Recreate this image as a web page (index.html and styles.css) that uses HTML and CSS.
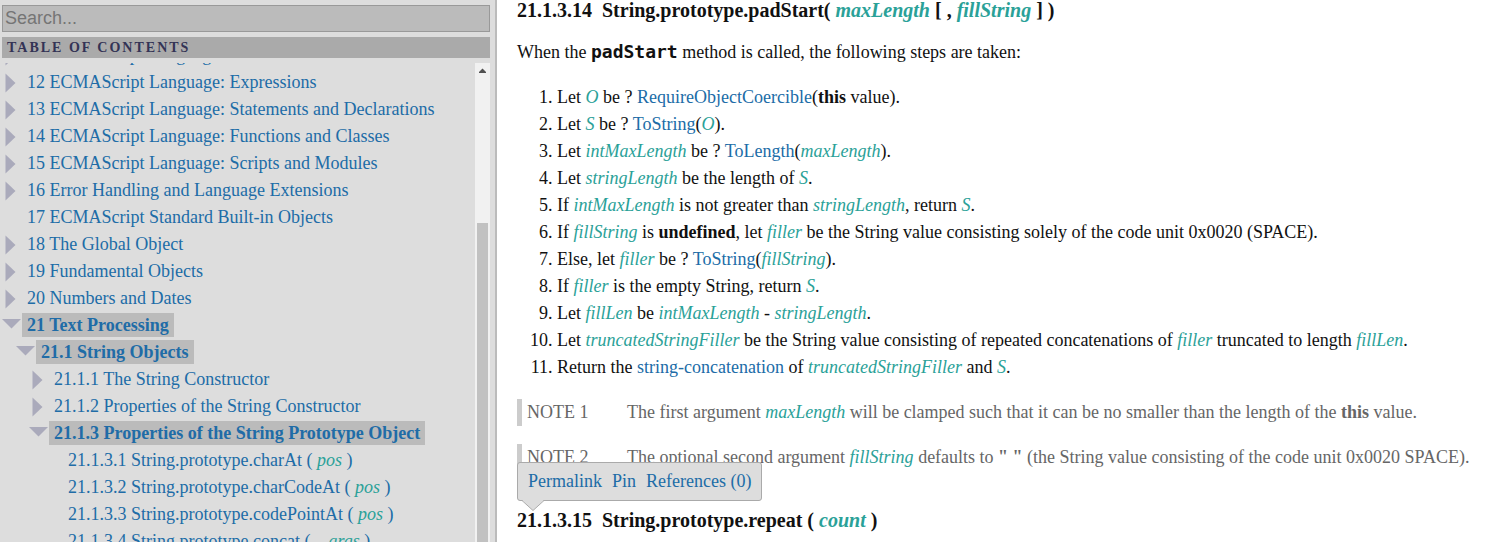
FILE: index.html
```
<!DOCTYPE html>
<html lang="en">
<head>
<meta charset="utf-8">
<title>ECMAScript Language Specification</title>
<link rel="stylesheet" href="styles.css">
</head>
<body>
<svg class="sprite" aria-hidden="true">
  <symbol id="closed" viewBox="0 0 20 27"><path d="M3.5 4.500v19l10-9.500z"/></symbol>
  <symbol id="open" viewBox="0 0 20 27"><path d="M0 7h19l-9.500 9.500z"/></symbol>
</svg>
<aside class="menu">
  <input class="search" type="text" placeholder="Search..." aria-label="Search">
  <div class="menu-header">Table of Contents</div>
  <div class="toc-pane">
    <nav class="toc">
      <ul class="toc-list">
        <li><div class="row"><button class="toggle" aria-label="Expand"><svg><use href="#closed"/></svg></button><a href="#s11">11 ECMAScript Language: Lexical Grammar</a></div></li>
        <li><div class="row"><button class="toggle" aria-label="Expand"><svg><use href="#closed"/></svg></button><a href="#s12">12 ECMAScript Language: Expressions</a></div></li>
        <li><div class="row"><button class="toggle" aria-label="Expand"><svg><use href="#closed"/></svg></button><a href="#s13">13 ECMAScript Language: Statements and Declarations</a></div></li>
        <li><div class="row"><button class="toggle" aria-label="Expand"><svg><use href="#closed"/></svg></button><a href="#s14">14 ECMAScript Language: Functions and Classes</a></div></li>
        <li><div class="row"><button class="toggle" aria-label="Expand"><svg><use href="#closed"/></svg></button><a href="#s15">15 ECMAScript Language: Scripts and Modules</a></div></li>
        <li><div class="row"><button class="toggle" aria-label="Expand"><svg><use href="#closed"/></svg></button><a href="#s16">16 Error Handling and Language Extensions</a></div></li>
        <li><div class="row"><span class="toggle"></span><a href="#s17">17 ECMAScript Standard Built-in Objects</a></div></li>
        <li><div class="row"><button class="toggle" aria-label="Expand"><svg><use href="#closed"/></svg></button><a href="#s18">18 The Global Object</a></div></li>
        <li><div class="row"><button class="toggle" aria-label="Expand"><svg><use href="#closed"/></svg></button><a href="#s19">19 Fundamental Objects</a></div></li>
        <li><div class="row"><button class="toggle" aria-label="Expand"><svg><use href="#closed"/></svg></button><a href="#s20">20 Numbers and Dates</a></div></li>
        <li><div class="row revealed"><button class="toggle" aria-label="Collapse"><svg><use href="#open"/></svg></button><a href="#s21">21 Text Processing</a></div>
          <ul class="level-2">
            <li><div class="row revealed"><button class="toggle" aria-label="Collapse"><svg><use href="#open"/></svg></button><a href="#s21-1">21.1 String Objects</a></div>
              <ul class="level-3">
                <li><div class="row"><button class="toggle" aria-label="Expand"><svg><use href="#closed"/></svg></button><a href="#s21-1-1">21.1.1 The String Constructor</a></div></li>
                <li><div class="row"><button class="toggle" aria-label="Expand"><svg><use href="#closed"/></svg></button><a href="#s21-1-2">21.1.2 Properties of the String Constructor</a></div></li>
                <li><div class="row revealed"><button class="toggle" aria-label="Collapse"><svg><use href="#open"/></svg></button><a href="#s21-1-3">21.1.3 Properties of the String Prototype Object</a></div>
                  <ul class="level-4">
                    <li><div class="row"><span class="toggle"></span><a href="#char-at">21.1.3.1 String.prototype.charAt ( <var>pos</var> )</a></div></li>
                    <li><div class="row"><span class="toggle"></span><a href="#char-code-at">21.1.3.2 String.prototype.charCodeAt ( <var>pos</var> )</a></div></li>
                    <li><div class="row"><span class="toggle"></span><a href="#code-point-at">21.1.3.3 String.prototype.codePointAt ( <var>pos</var> )</a></div></li>
                    <li><div class="row"><span class="toggle"></span><a href="#concat">21.1.3.4 String.prototype.concat ( ...<var>args</var> )</a></div></li>
                  </ul>
                </li>
              </ul>
            </li>
          </ul>
        </li>
      </ul>
    </nav>
    <div class="scrollbar" aria-hidden="true">
      <svg class="scroll-up" viewBox="0 0 15 15"><path d="M4 10h7v-1l-3.500-3.500L4 9z"/></svg>
      <div class="thumb"></div>
    </div>
  </div>
</aside>
<main class="spec">
  <section>
    <h1><span class="secnum">21.1.3.14</span>String.prototype.padStart( <var>maxLength</var> [ , <var>fillString</var> ] )</h1>
    <p>When the <code>padStart</code> method is called, the following steps are taken:</p>
    <ol>
      <li>Let <var>O</var> be ? <a href="#roc">RequireObjectCoercible</a>(<b>this</b> value).</li>
      <li>Let <var>S</var> be ? <a href="#tostring">ToString</a>(<var>O</var>).</li>
      <li>Let <var>intMaxLength</var> be ? <a href="#tolength">ToLength</a>(<var>maxLength</var>).</li>
      <li>Let <var>stringLength</var> be the length of <var>S</var>.</li>
      <li>If <var>intMaxLength</var> is not greater than <var>stringLength</var>, return <var>S</var>.</li>
      <li>If <var>fillString</var> is <b>undefined</b>, let <var>filler</var> be the String value consisting solely of the code unit 0x0020 (SPACE).</li>
      <li>Else, let <var>filler</var> be ? <a href="#tostring">ToString</a>(<var>fillString</var>).</li>
      <li>If <var>filler</var> is the empty String, return <var>S</var>.</li>
      <li>Let <var>fillLen</var> be <var>intMaxLength</var> - <var>stringLength</var>.</li>
      <li>Let <var>truncatedStringFiller</var> be the String value consisting of repeated concatenations of <var>filler</var> truncated to length <var>fillLen</var>.</li>
      <li>Return the <a href="#concatenation">string-concatenation</a> of <var>truncatedStringFiller</var> and <var>S</var>.</li>
    </ol>
    <div class="note"><span class="note-label">NOTE 1</span><div>The first argument <var>maxLength</var> will be clamped such that it can be no smaller than the length of the <b>this</b> value.</div></div>
    <div class="note"><span class="note-label">NOTE 2</span><div>The optional second argument <var>fillString</var> defaults to <b>" "</b> (the String value consisting of the code unit 0x0020 SPACE).</div></div>
  </section>
  <section class="clause">
    <div class="toolbox">
      <a href="#repeat">Permalink</a><a href="#pin">Pin</a><a href="#refs">References (0)</a>
      <svg class="arrow" viewBox="0 0 22 11"><path class="arrow-fill" d="M0 0h22L11 10.500z"/><path class="arrow-line" d="M0 .5 11 10.500 22 .5"/></svg>
    </div>
    <h1><span class="secnum">21.1.3.15</span>String.prototype.repeat ( <var>count</var> )</h1>
  </section>
</main>
</body>
</html>
```
FILE: styles.css
```
* { box-sizing: border-box; }
body {
  margin: 0;
  display: flex;
  height: 100vh;
  overflow: hidden;
  font: 18px/27px "Liberation Serif", serif;
  color: #111;
  background: #fff;
}
a { color: #206ca7; text-decoration: none; }
var { color: #2aa198; }
.sprite { position: absolute; width: 0; height: 0; }

.menu {
  flex: 0 0 497px;
  max-width: 50%;
  display: flex;
  flex-direction: column;
  gap: 5px;
  padding: 5px 5px 0 2px;
  background: #ddd;
  border-right: 2px solid #bbb;
}
.search {
  width: 100%;
  height: 27px;
  padding: 0 2px;
  border: 1px solid #999;
  border-radius: 0;
  background: #bbb;
  font: 18px "Liberation Sans", sans-serif;
  outline: none;
}
.search::placeholder { color: #757575; }
.menu-header {
  padding: 0 5px;
  background: #aaa;
  color: #335;
  font-size: 14px;
  font-weight: bold;
  line-height: 21px;
  letter-spacing: 2px;
  text-transform: uppercase;
}
.toc-pane {
  flex: 1;
  min-height: 0;
  display: flex;
  overflow: hidden;
}
.toc { flex: 1; min-width: 0; overflow: hidden; }
.toc ul { margin: 0; padding: 0; list-style: none; }
.toc .toc-list { margin-top: -21px; }
.toc .level-2, .toc .level-4 { padding-left: 14px; }
.toc .level-3 { padding-left: 13px; }
.row { display: flex; height: 27px; white-space: nowrap; }
.row a { margin: 1px 0 2px; padding: 0 5px; line-height: 24px; color: #206ca7; }
.revealed a { background: #bbb; font-weight: bold; }
.toggle {
  flex: 0 0 20px;
  height: 27px;
  padding: 0;
  border: 0;
  background: none;
}
.toggle svg { display: block; width: 20px; height: 27px; fill: #aab; }
.scrollbar { flex: 0 0 15px; display: flex; flex-direction: column; background: #f1f1f1; }
.scroll-up { width: 15px; height: 15px; fill: #505050; }
.thumb { flex: 1; margin: 145px 2px 0; background: #c1c1c1; }

.spec { flex: 1; min-width: 0; padding: 0 20px; }
h1 { margin: 0; font-size: 20px; line-height: 20px; }
.secnum { margin-right: 10px; }
p { margin: 19px 0 18px; }
code { font: bold 18px/18px "DejaVu Sans Mono", monospace; }
ol { margin: 0 0 18px; padding-left: 40px; }
.note {
  display: flex;
  margin-bottom: 18px;
  padding-left: 5px;
  border-left: 5px solid #ccc;
  color: #666;
}
.note-label { flex: 0 0 100px; }
.clause { position: relative; padding-top: 21px; }
.toolbox {
  position: absolute;
  left: 0;
  bottom: 29px;
  display: flex;
  gap: 10px;
  padding: 5px 10px;
  border: 1px solid #aaa;
  border-radius: 3px;
  background: #ddd;
  white-space: nowrap;
}
.arrow { position: absolute; left: 4px; top: 100%; width: 22px; height: 11px; }
.arrow-fill { fill: #ddd; }
.arrow-line { fill: none; stroke: #aaa; }
```
